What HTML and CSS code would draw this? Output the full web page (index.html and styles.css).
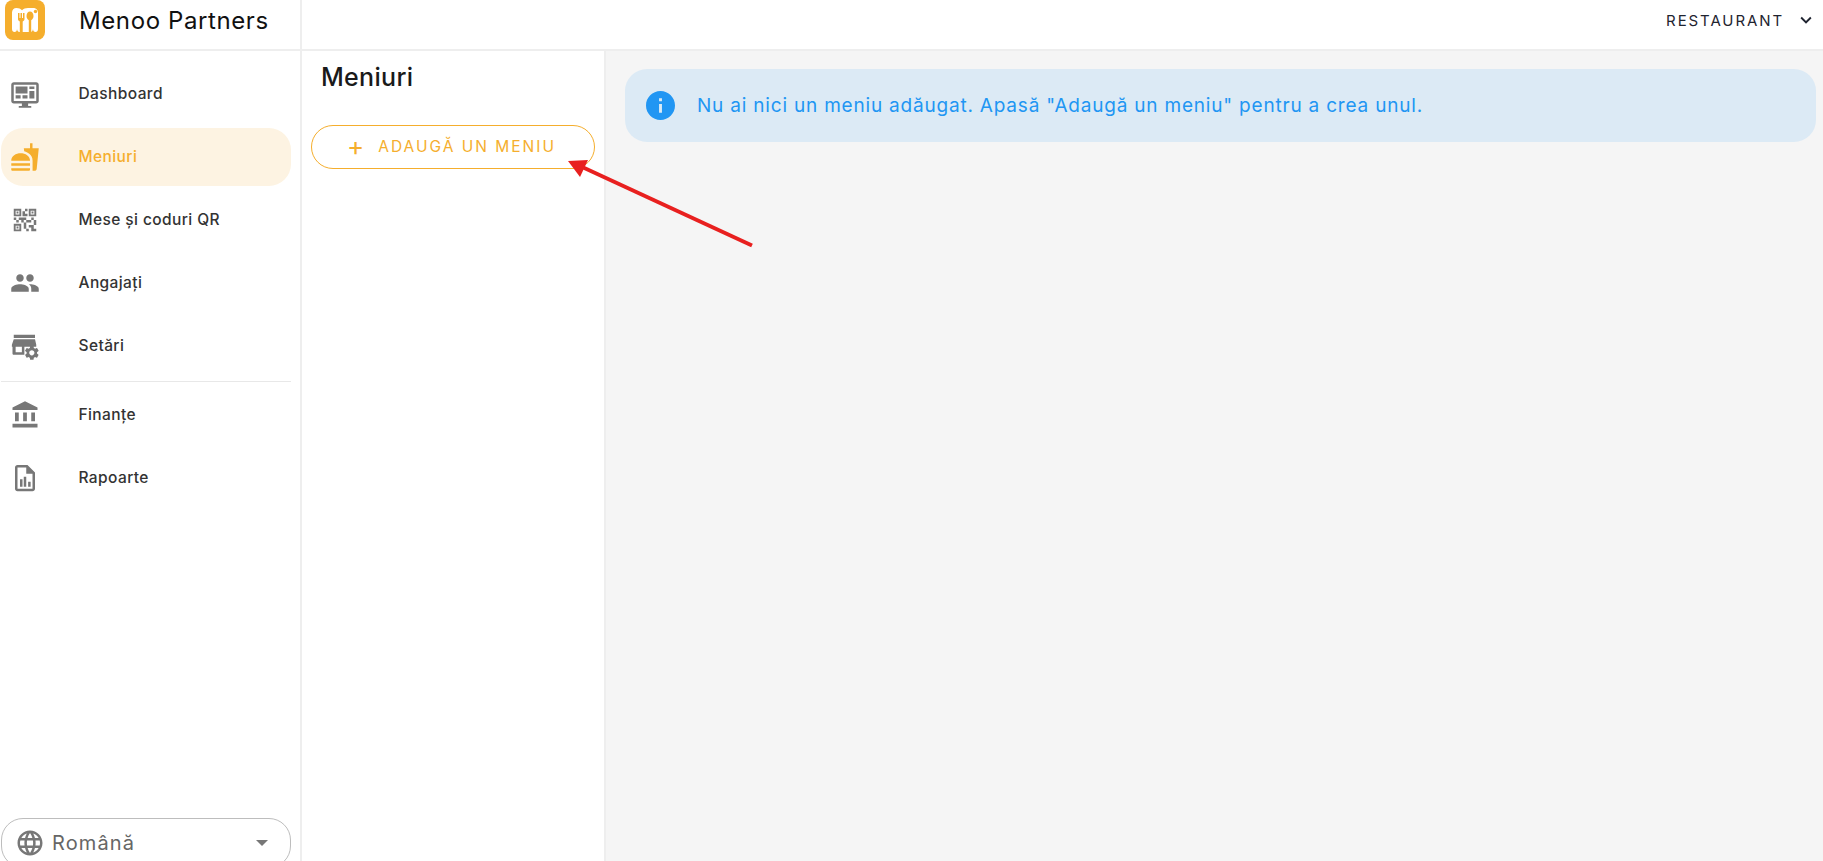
FILE: index.html
```html
<!DOCTYPE html>
<html lang="ro">
<head>
<meta charset="utf-8">
<title>Menoo Partners</title>
<link rel="stylesheet" href="styles.css">
</head>
<body>
<div class="app">
  <header class="topbar">
    <div class="brand">
      <svg class="logo" viewBox="0 0 40 40">
        <rect width="40" height="40" rx="8" fill="#f5ae2d"/>
        <path d="M7 12.500C7 9.800 8.800 8 11.500 8c2.400 0 4 .8 5.500 2.200C18.500 8.800 20.500 8 23 8h5c3 0 5 2 5 4.500V29c0 1.700-1 3-2.500 3S28 30.700 28 29v-.5c0 2.200-1 3.500-2.500 3.500h-11C13 32 12 30.700 12 28.500v.5c0 1.700-1 3-2.500 3S7 30.700 7 29z" fill="#fff"/>
        <path d="M13 13h1.500v5h1v-5H17v5h1v-5h1.500v6c0 1.300-.8 2.100-1.800 2.400V32h-2.900V21.400c-1-.3-1.800-1.100-1.800-2.400z" fill="#f5ae2d"/>
        <path d="M25 11.500c2 0 3.500 2.100 3.500 4.500 0 2-1 3.600-2.300 4.200V32h-2.400V20.200c-1.300-.6-2.300-2.200-2.300-4.200 0-2.400 1.500-4.500 3.500-4.500z" fill="#f5ae2d"/>
        <circle cx="30.500" cy="11.500" r="1.700" fill="#f5ae2d"/>
      </svg>
      <span class="brand-name">Menoo Partners</span>
    </div>
    <div class="account">
      <span class="account-name">RESTAURANT</span>
      <svg class="chevron" viewBox="0 0 24 24"><path d="M7.410 8.590L12 13.170l4.590-4.580L18 10l-6 6-6-6z"/></svg>
    </div>
  </header>

  <div class="body">
    <aside class="sidebar">
      <nav class="nav">
        <a class="nav-item">
          <svg class="nav-icon" viewBox="0 0 24 24"><path fill-rule="evenodd" d="M3 2.500h18c1.100 0 2 .9 2 2v13c0 1.100-.9 2-2 2h-6.500v2H17v1.500H7V21.500h2.500v-2H3c-1.100 0-2-.9-2-2v-13c0-1.100.9-2 2-2zM3 4.500v13h18v-13z"/><path d="M4.500 6h9.500v5.500H4.500zM15.500 6h4v2h-4zM15.500 9.500h4v6h-4zM4.500 13h4v2.500h-4zM10 13h4v2.500h-4z"/></svg>
          <span>Dashboard</span>
        </a>
        <a class="nav-item active">
          <svg class="nav-icon" viewBox="0 0 24 24"><path d="M18.060 22.990h1.660c.84 0 1.530-.64 1.630-1.460L23 5.050h-5V1h-1.970v4.050h-4.970l.3 2.340c1.710.47 3.310 1.320 4.270 2.260 1.440 1.420 2.430 2.890 2.430 5.290v8.050zM1 21.990V21h15.030v.99c0 .55-.45 1-1.010 1H2.010c-.56 0-1.010-.45-1.010-1zm15.030-7c0-4-3.750-6-7.510-6S1 11 1 15h15.030zM1.020 17h15v2h-15z"/></svg>
          <span>Meniuri</span>
        </a>
        <a class="nav-item">
          <svg class="nav-icon" viewBox="0 0 24 24"><path d="M15 21h-2v-2h2v2zm-2-7h-2v5h2v-5zm8-2h-2v4h2v-4zm-2-2h-2v2h2v-2zM7 12H5v2h2v-2zm-2-2H3v2h2v-2zm7-5h2V3h-2v2zm-7.500-.5v3h3v-3h-3zM9 9H3V3h6v6zm-4.500 7.500v3h3v-3h-3zM9 21H3v-6h6v6zm7.500-16.500v3h3v-3h-3zM21 9h-6V3h6v6zm-2 10v-3h-4v2h2v3h4v-2h-2zm-2-7h-4v2h4v-2zm-4-2H7v2h2v2h2v-2h2v-2zm1-1V7h-2V5h-2v4h4zM6.750 5.250h-1.500v1.500h1.500v-1.500zm0 12h-1.500v1.500h1.500v-1.500zm12-12h-1.500v1.500h1.500v-1.500z"/></svg>
          <span>Mese și coduri QR</span>
        </a>
        <a class="nav-item">
          <svg class="nav-icon" viewBox="0 0 24 24"><path d="M16 11c1.660 0 2.990-1.340 2.990-3S17.660 5 16 5c-1.660 0-3 1.340-3 3s1.340 3 3 3zm-8 0c1.660 0 2.990-1.340 2.990-3S9.660 5 8 5C6.340 5 5 6.340 5 8s1.340 3 3 3zm0 2c-2.330 0-7 1.170-7 3.500V19h14v-2.500c0-2.330-4.670-3.500-7-3.500zm8 0c-.29 0-.62.02-.97.05 1.160.84 1.970 1.970 1.970 3.450V19h6v-2.500c0-2.330-4.670-3.500-7-3.500z"/></svg>
          <span>Angajați</span>
        </a>
        <a class="nav-item">
          <svg class="nav-icon" viewBox="0 0 24 24"><path d="M3 3h17v2.500H3zM3 6.500h17l1 4.500v1.500h-9.500V19H3c-.6 0-1-.4-1-1v-5.500H1.500V11zM4.500 12.500v4.500h5v-4.500z"/><g transform="translate(10.500 10.500) scale(.58)"><path d="M19.140 12.940c.04-.3.06-.61.06-.94 0-.32-.02-.64-.07-.94l2.030-1.580c.18-.14.23-.41.12-.61l-1.920-3.320c-.12-.22-.37-.29-.59-.22l-2.390.96c-.5-.38-1.030-.7-1.620-.94l-.36-2.540c-.04-.24-.24-.41-.48-.41h-3.840c-.24 0-.43.17-.47.41l-.36 2.540c-.59.24-1.130.57-1.620.94l-2.390-.96c-.22-.08-.47 0-.59.22L2.740 8.870c-.12.21-.08.47.12.61l2.030 1.580c-.05.3-.09.63-.09.94s.02.64.07.94l-2.030 1.580c-.18.14-.23.41-.12.61l1.920 3.320c.12.22.37.29.59.22l2.390-.96c.5.38 1.030.7 1.620.94l.36 2.540c.05.24.24.41.48.41h3.840c.24 0 .44-.17.47-.41l.36-2.540c.59-.24 1.130-.56 1.620-.94l2.390.96c.22.08.47 0 .59-.22l1.920-3.320c.12-.22.07-.47-.12-.61l-2.010-1.580zM12 15.600c-1.980 0-3.600-1.620-3.600-3.600s1.620-3.600 3.600-3.600 3.600 1.620 3.600 3.600-1.620 3.600-3.600 3.600z"/></g></svg>
          <span>Setări</span>
        </a>
        <hr class="nav-divider">
        <a class="nav-item">
          <svg class="nav-icon" viewBox="0 0 24 24"><path d="M4 10h3v7H4zM10.500 10h3v7h-3zM2 19h20v3H2zM17 10h3v7h-3zM12 1L2 6v2h20V6z"/></svg>
          <span>Finanțe</span>
        </a>
        <a class="nav-item">
          <svg class="nav-icon" viewBox="0 0 24 24"><path d="M14 1.500H6c-1.100 0-2 .9-2 2v17c0 1.100.9 2 2 2h12c1.100 0 2-.9 2-2V7.500l-6-6zm4 19H6v-17h7v5h5v12zM8 13h2v6H8zM11 11h2v8h-2zM14.500 15h2v4h-2z"/></svg>
          <span>Rapoarte</span>
        </a>
      </nav>
      <div class="language">
        <svg class="globe" viewBox="0 0 24 24"><path d="M11.990 2C6.470 2 2 6.480 2 12s4.470 10 9.990 10C17.520 22 22 17.520 22 12S17.520 2 11.990 2zm6.930 6h-2.950c-.32-1.250-.78-2.450-1.380-3.560 1.840.63 3.370 1.910 4.330 3.560zM12 4.040c.83 1.200 1.480 2.530 1.910 3.960h-3.820c.43-1.430 1.080-2.760 1.910-3.960zM4.260 14C4.100 13.360 4 12.690 4 12s.1-1.360.26-2h3.380c-.08.66-.14 1.320-.14 2 0 .68.06 1.340.14 2H4.260zm.82 2h2.950c.32 1.250.78 2.450 1.380 3.560-1.840-.63-3.370-1.900-4.330-3.560zm2.950-8H5.080c.96-1.660 2.490-2.930 4.330-3.560C8.810 5.550 8.350 6.750 8.030 8zM12 19.960c-.83-1.200-1.480-2.530-1.910-3.960h3.820c-.43 1.430-1.080 2.760-1.910 3.960zM14.340 14H9.660c-.09-.66-.16-1.320-.16-2 0-.68.07-1.350.16-2h4.680c.09.65.16 1.320.16 2 0 .68-.07 1.340-.16 2zm.25 5.560c.6-1.110 1.060-2.310 1.380-3.560h2.950c-.96 1.650-2.490 2.930-4.330 3.560zM16.360 14c.08-.66.14-1.320.14-2 0-.68-.06-1.340-.14-2h3.380c.16.64.26 1.310.26 2s-.1 1.360-.26 2h-3.380z"/></svg>
        <span class="language-name">Română</span>
        <span class="caret"></span>
      </div>
    </aside>

    <section class="menus">
      <h1 class="menus-title">Meniuri</h1>
      <button class="add-btn" type="button"><span class="plus">+</span><span>ADAUGĂ UN MENIU</span></button>
    </section>

    <main class="content">
      <div class="alert">
        <svg class="alert-icon" viewBox="2 2 20 20"><path d="M12 2C6.480 2 2 6.480 2 12s4.480 10 10 10 10-4.480 10-10S17.520 2 12 2zm1 15h-2v-6h2v6zm0-8h-2V7h2v2z"/></svg>
        <span>Nu ai nici un meniu adăugat. Apasă "Adaugă un meniu" pentru a crea unul.</span>
      </div>
    </main>
  </div>

  <svg class="annotation" viewBox="0 0 1823 861">
    <path d="M752 245.500L580 166" stroke="#e8201f" stroke-width="4" fill="none"/>
    <path d="M568 161l20-1-8 17z" fill="#e8201f"/>
  </svg>
</div>
</body>
</html>
```

FILE: styles.css
```css
* { box-sizing: border-box; }

html, body {
  margin: 0;
  height: 100%;
  overflow: hidden;
}

body {
  font-family: Inter, "Noto Sans", "Liberation Sans", sans-serif;
  background: #fff;
  color: #1a1a1a;
}

.app {
  position: relative;
  display: flex;
  flex-direction: column;
  height: 861px;
}

.topbar {
  display: flex;
  align-items: center;
  justify-content: space-between;
  flex: 0 0 51px;
  border-bottom: 2px solid #eeeeee;
}

.brand {
  display: flex;
  align-items: center;
  width: 302px;
  height: 49px;
  padding-left: 5px;
  padding-bottom: 9px;
  border-right: 2px solid #eeeeee;
}

.logo {
  width: 40px;
  height: 40px;
  flex: none;
}

.brand-name {
  margin: 2px 0 0 34px;
  font-size: 24px;
  line-height: 40px;
  color: #111;
  letter-spacing: .6px;
}

.account {
  display: flex;
  align-items: center;
  padding-right: 6px;
  padding-bottom: 9px;
}

.account-name {
  font-size: 15px;
  font-weight: 400;
  letter-spacing: 1.900px;
  color: #1f2430;
}

.chevron {
  width: 22px;
  height: 22px;
  margin-left: 11px;
  fill: #1f2430;
}

.body {
  display: flex;
  flex: 1;
  min-height: 0;
}

.sidebar {
  display: flex;
  flex-direction: column;
  flex: 0 0 302px;
  padding-right: 9px;
  border-right: 2px solid #eeeeee;
  overflow: hidden;
}

.nav {
  display: flex;
  flex-direction: column;
  gap: 5px;
  padding: 14px 0 0 1px;
}

.nav-item {
  display: flex;
  align-items: center;
  height: 58px;
  padding-left: 9px;
  border-radius: 22px;
  font-size: 15.500px;
  font-weight: 500;
  letter-spacing: .4px;
  color: #333;
}

.nav-item span {
  margin-bottom: 2px;
}

.nav-icon {
  width: 30px;
  height: 30px;
  flex: none;
  margin-right: 38.500px;
  fill: #777;
}

.nav-item.active {
  background: #fdf3e2;
  color: #f5ae2d;
}

.nav-item.active .nav-icon {
  fill: #f5ae2d;
}

.nav-divider {
  width: 100%;
  height: 1px;
  margin: 1px 0 -1px;
  border: 0;
  background: #e8e8e8;
}

.language {
  display: flex;
  align-items: center;
  flex: none;
  height: 50px;
  margin: auto 0 -7px 1px;
  padding: 0 22px 0 13px;
  border: 1px solid #bdbdbd;
  border-radius: 22px;
  color: #666;
}

.globe {
  width: 30px;
  height: 30px;
  flex: none;
  fill: #777;
}

.language-name {
  flex: 1;
  margin-left: 7px;
  font-size: 20px;
  letter-spacing: 1.100px;
}

.caret {
  width: 0;
  height: 0;
  border-left: 6.500px solid transparent;
  border-right: 6.500px solid transparent;
  border-top: 6.500px solid #777;
}

.menus {
  flex: 0 0 304px;
  padding: 0 9px;
  border-right: 2px solid #eeeeee;
}

.menus-title {
  margin: 9px 0 31px 10px;
  font-size: 25px;
  line-height: 34px;
  font-weight: 500;
  letter-spacing: .3px;
  color: #1a1a1a;
}

.add-btn {
  display: flex;
  align-items: center;
  justify-content: center;
  width: 284px;
  height: 44px;
  padding: 0 3px 2px 0;
  border: 1px solid #f5ae2d;
  border-radius: 22px;
  background: #fff;
  font-family: inherit;
  font-size: 15.500px;
  letter-spacing: 2px;
  color: #f5ae2d;
}

.plus {
  margin-right: 14px;
  font-size: 26px;
  line-height: 26px;
  letter-spacing: 0;
}

.content {
  flex: 1;
  padding: 18px 7px 0 19px;
  background: #f5f5f5;
}

.alert {
  display: flex;
  align-items: center;
  height: 73px;
  padding-left: 21px;
  border-radius: 22px;
  background: #dceaf5;
  font-size: 19px;
  letter-spacing: .8px;
  color: #2196f3;
}

.alert-icon {
  width: 29px;
  height: 29px;
  flex: none;
  margin-right: 22px;
  fill: #2196f3;
}

.annotation {
  position: absolute;
  inset: 0;
  width: 1823px;
  height: 861px;
  pointer-events: none;
}
```
